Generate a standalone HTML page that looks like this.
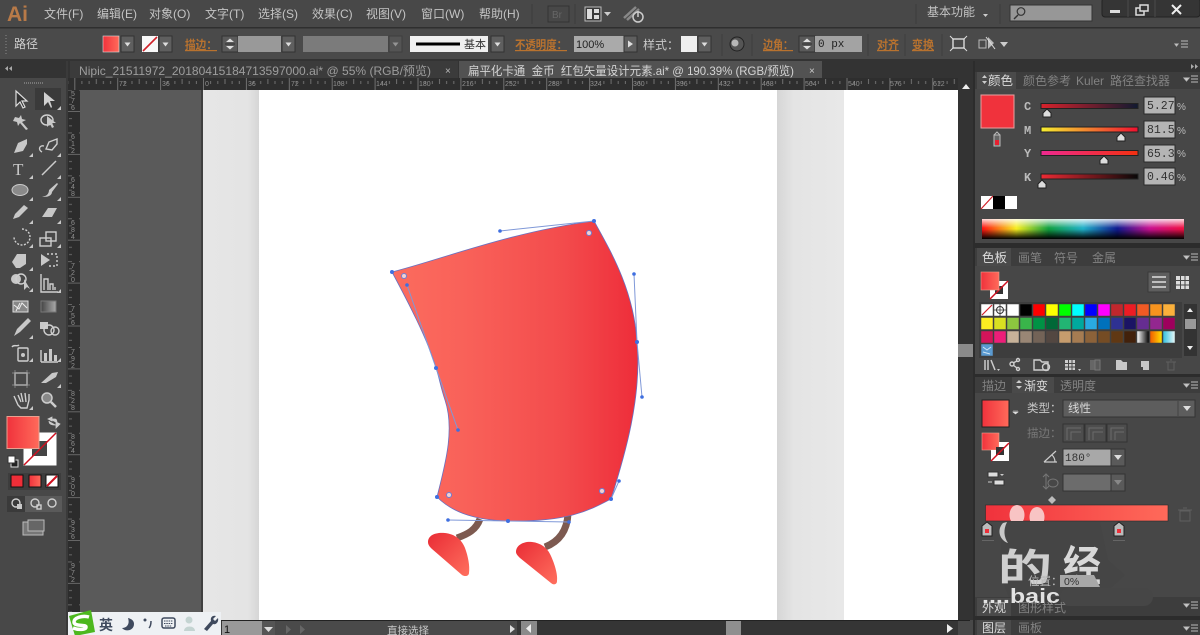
<!DOCTYPE html>
<html><head><meta charset="utf-8">
<style>
html,body{margin:0;padding:0;background:#484848;width:1200px;height:635px;overflow:hidden}
svg{display:block;position:absolute;left:0;top:0}
text{font-family:"Liberation Sans","Noto Sans CJK SC",sans-serif;white-space:pre}
.m{font-size:12px;fill:#c4c4c4}
.o{font-size:12px;fill:#b8722f;text-decoration:underline;font-weight:bold}
.d{font-size:12px;fill:#828282}
.r{font-size:7px;fill:#8f8f8f}
.v{font-family:"Liberation Mono",monospace;font-size:11.5px;fill:#333}
.ic{fill:none;stroke:#cfcfcf;stroke-width:1.4}
.if{fill:#c8c8c8}
</style></head><body>
<svg width="1200" height="635" viewBox="0 0 1200 635" xmlns="http://www.w3.org/2000/svg">
<defs>
<linearGradient id="body" x1="0" x2="1" y1="0" y2="0"><stop offset="0" stop-color="#fb6c5e"/><stop offset=".3" stop-color="#f96159"/><stop offset=".7" stop-color="#f34b4c"/><stop offset="1" stop-color="#ee2d3a"/></linearGradient>
<linearGradient id="g" x1="0" x2="1" y1="0" y2="0"><stop offset="0" stop-color="#f0323c"/><stop offset="1" stop-color="#ff6a5a"/></linearGradient>
<linearGradient id="gt" x1="0" x2="1" y1="0" y2="0"><stop offset="0" stop-color="#444"/><stop offset="1" stop-color="#aaa"/></linearGradient>
<linearGradient id="foot" x1="0" x2="1" y1="0" y2="1"><stop offset="0" stop-color="#e92c35"/><stop offset="1" stop-color="#ff6f5e"/></linearGradient>
<linearGradient id="paste" x1="0" x2="1" y1="0" y2="0"><stop offset="0" stop-color="#e6e6e6"/><stop offset=".8" stop-color="#e4e4e4"/><stop offset="1" stop-color="#d6d6d6"/></linearGradient>
<linearGradient id="paste2" x1="0" x2="1" y1="0" y2="0"><stop offset="0" stop-color="#d6d6d6"/><stop offset=".25" stop-color="#e4e4e4"/><stop offset="1" stop-color="#e8e8e8"/></linearGradient>
<linearGradient id="spec" x1="0" x2="1" y1="0" y2="0"><stop offset="0" stop-color="#ff1010"/><stop offset=".17" stop-color="#f6ee20"/><stop offset=".33" stop-color="#10a040"/><stop offset=".5" stop-color="#20b0c8"/><stop offset=".67" stop-color="#101a90"/><stop offset=".83" stop-color="#c81090"/><stop offset="1" stop-color="#f01040"/></linearGradient>
<linearGradient id="specv" x1="0" x2="0" y1="0" y2="1"><stop offset="0" stop-color="#fff" stop-opacity=".85"/><stop offset=".45" stop-color="#fff" stop-opacity="0"/><stop offset=".5" stop-color="#000" stop-opacity="0"/><stop offset="1" stop-color="#000" stop-opacity="1"/></linearGradient>
<linearGradient id="sc" x1="0" x2="1"><stop offset="0" stop-color="#d8222c"/><stop offset="1" stop-color="#101a30"/></linearGradient>
<linearGradient id="sm" x1="0" x2="1"><stop offset="0" stop-color="#f5ee30"/><stop offset="1" stop-color="#f01030"/></linearGradient>
<linearGradient id="sy" x1="0" x2="1"><stop offset="0" stop-color="#ee2a90"/><stop offset="1" stop-color="#f23010"/></linearGradient>
<linearGradient id="sk" x1="0" x2="1"><stop offset="0" stop-color="#ee2a34"/><stop offset="1" stop-color="#080808"/></linearGradient>
<linearGradient id="g1" x1="0" x2="1"><stop offset="0" stop-color="#fff"/><stop offset="1" stop-color="#000"/></linearGradient>
<linearGradient id="g2" x1="0" x2="1"><stop offset="0" stop-color="#f15a00"/><stop offset="1" stop-color="#ffe000"/></linearGradient>
<linearGradient id="g3" x1="0" x2="1"><stop offset="0" stop-color="#30c0e0"/><stop offset="1" stop-color="#e8f8f8"/></linearGradient>
<pattern id="th" x="203" y="0" width="42.9" height="12" patternUnits="userSpaceOnUse">
<path d="M.5 0V12M7.6 9V12M14.8 9V12M22 7V12M29.1 9V12M36.3 9V12" stroke="#707070" stroke-width="1" fill="none"/></pattern>
<pattern id="tv" x="0" y="111" width="12" height="42.9" patternUnits="userSpaceOnUse">
<path d="M0 .5H12M9 7.6H12M9 14.8H12M7 22H12M9 29.1H12M9 36.3H12" stroke="#666" stroke-width="1" fill="none"/></pattern>
<g id="arrowbtn"><rect width="13" height="16" fill="#5f5f5f" stroke="#333"/><path d="M3.5 6.5H9.5L6.5 10.5Z" fill="#ddd"/></g>
<g id="stepper"><rect width="16" height="16" fill="#5a5a5a" stroke="#333"/><path d="M8 2.5L12 6H4ZM8 13.5L4 10H12Z" fill="#ddd"/><path d="M3 8H13" stroke="#333"/></g>
<path id="corner" d="M0 4L4 0V4Z" fill="#c8c8c8"/>
<path id="thumb" d="M-4 5V1L0 -3L4 1V5Z" fill="#ddd" stroke="#222"/>
</defs>

<g style="filter:blur(.35px)">
<!-- base -->
<rect width="1200" height="635" fill="#484848"/>
<!-- menu bar -->
<rect width="1200" height="27" fill="#484848"/>
<rect y="27" width="1200" height="1.5" fill="#2f2f2f"/>
<text x="7" y="21" font-size="21" fill="#b87a48" font-weight="bold">Ai</text>
<text class="m" x="44" y="18">文件(F)</text>
<text class="m" x="97" y="18">编辑(E)</text>
<text class="m" x="149" y="18">对象(O)</text>
<text class="m" x="205" y="18">文字(T)</text>
<text class="m" x="258" y="18">选择(S)</text>
<text class="m" x="312" y="18">效果(C)</text>
<text class="m" x="366" y="18">视图(V)</text>
<text class="m" x="421" y="18">窗口(W)</text>
<text class="m" x="479" y="18">帮助(H)</text>
<path d="M532 4V24M575 4V24M916 4V24M1000 4V24" stroke="#3c3c3c"/>
<rect x="548" y="6" width="21" height="16" fill="none" stroke="#333"/>
<text x="552" y="18" font-size="10" fill="#666">Br</text>
<g><rect x="585" y="7" width="16" height="14" fill="#3a3a3a" stroke="#bbb"/><rect x="587" y="9" width="5" height="10" fill="#ddd"/><rect x="594" y="9" width="5" height="4" fill="#ddd"/><rect x="594" y="15" width="5" height="4" fill="#ddd"/><path d="M604 12H611L607.5 16Z" fill="#ccc"/></g>
<path d="M624 18L636 7M627 20L639 9" stroke="#888" stroke-width="2.5" fill="none"/>
<circle cx="638" cy="17" r="5" fill="none" stroke="#ccc" stroke-width="1.5"/><path d="M638 11V17" stroke="#ccc" stroke-width="1.5"/>
<text class="m" x="927" y="16">基本功能</text>
<path d="M983 14H988L985.5 17Z" fill="#ccc"/>
<rect x="1010" y="5" width="82" height="16" fill="#979797" stroke="#333"/>
<circle cx="1021" cy="11.5" r="3.8" fill="none" stroke="#333" stroke-width="1.2"/><path d="M1018 15L1014 19" stroke="#333" stroke-width="1.4"/>
<rect x="1102" y="-2" width="98" height="19" rx="3" fill="#353535" stroke="#222"/>
<path d="M1128 0V17M1155 0V17" stroke="#4a4a4a"/>
<rect x="1110" y="10" width="10" height="3" fill="#ddd"/>
<rect x="1136" y="8" width="8" height="7" fill="none" stroke="#ddd" stroke-width="1.5"/><rect x="1140" y="5" width="8" height="6" fill="#353535" stroke="#ddd" stroke-width="1.5"/>
<path d="M1172 5L1181 14M1181 5L1172 14" stroke="#eee" stroke-width="2"/>

<!-- control bar -->
<rect y="29" width="1200" height="31" fill="#4a4a4a"/>
<rect y="59" width="1200" height="2" fill="#333"/>
<path d="M6 35V54" stroke="#6a6a6a" stroke-dasharray="1 2" stroke-width="2"/>
<text x="14" y="48" font-size="12" fill="#d0d0d0">路径</text>
<rect x="103" y="36" width="16" height="16" fill="url(#g)" stroke="#ddd" stroke-width=".6"/>
<use href="#arrowbtn" x="121" y="36"/>
<rect x="142" y="36" width="16" height="16" fill="#f8f8f8"/><path d="M143 51L157 37" stroke="#d02028" stroke-width="1.6"/>
<use href="#arrowbtn" x="159" y="36"/>
<text class="o" x="185" y="49" textLength="32" lengthAdjust="spacingAndGlyphs">描边：</text>
<use href="#stepper" x="222" y="36"/>
<rect x="238" y="36" width="43" height="16" fill="#999"/>
<use href="#arrowbtn" x="282" y="36"/>
<rect x="303" y="36" width="85" height="16" fill="#7b7b7b"/>
<g opacity=".5"><use href="#arrowbtn" x="389" y="36"/></g>
<rect x="410" y="36" width="78" height="16" fill="#f0f0f0"/>
<rect x="416" y="42.5" width="44" height="3" fill="#000"/>
<text x="464" y="48" font-size="11" fill="#333">基本</text>
<use href="#arrowbtn" x="491" y="36"/>
<text class="o" x="515" y="49" textLength="52" lengthAdjust="spacingAndGlyphs">不透明度：</text>
<rect x="574" y="36" width="50" height="16" fill="#aaa"/>
<text x="576" y="48" font-size="11" fill="#222">100%</text>
<rect x="624" y="36" width="13" height="16" fill="#5f5f5f" stroke="#333"/><path d="M628 40.5L633 44L628 47.5Z" fill="#ddd"/>
<text x="643" y="49" font-size="12" fill="#c8c8c8">样式：</text>
<rect x="681" y="36" width="16" height="16" fill="#eee"/>
<use href="#arrowbtn" x="698" y="36"/>
<circle cx="737" cy="44" r="7" fill="#555" stroke="#222"/><circle cx="735" cy="43" r="3.5" fill="#b8b8b8"/>
<path d="M722 34V56M752 34V56M868 34V56M905 34V56M942 34V56" stroke="#3e3e3e"/>
<text class="o" x="763" y="49" textLength="30" lengthAdjust="spacingAndGlyphs">边角：</text>
<use href="#stepper" x="799" y="36"/>
<rect x="815" y="36" width="47" height="16" fill="#a3a3a3"/>
<text x="818" y="47" font-size="11" fill="#222" style="font-family:'Liberation Mono',monospace">0 px</text>
<text class="o" x="877" y="49" textLength="22" lengthAdjust="spacingAndGlyphs">对齐</text>
<text class="o" x="912" y="49" textLength="22" lengthAdjust="spacingAndGlyphs">变换</text>
<rect x="953" y="39" width="11" height="9" fill="none" stroke="#ddd" stroke-width="1.4"/>
<path d="M950 36l3 3M967 36l-3 3M950 51l3-3M967 51l-3-3" stroke="#ddd"/>
<rect x="979" y="40" width="7" height="8" fill="none" stroke="#bbb"/><path d="M988 37l6 6-6 6z" fill="#bbb"/><path d="M986 37l9 12" stroke="#ddd"/>
<path d="M1000 42H1008L1004 47Z" fill="#ccc"/>
<path d="M1175 44H1178L1176.500 46ZM1181 41H1188M1181 44H1188M1181 47H1188" stroke="#bbb" fill="#ccc"/>

<!-- tabs -->
<rect x="0" y="61" width="1200" height="17" fill="#333"/>
<rect x="70" y="61" width="388" height="17" fill="#3b3b3b"/>
<rect x="459" y="61" width="363" height="17" fill="#525252"/>
<text x="79" y="75" font-size="12" fill="#9d9d9d" textLength="352" lengthAdjust="spacingAndGlyphs">Nipic_21511972_20180415184713597000.ai* @ 55% (RGB/预览)</text>
<text x="445" y="74" font-size="10" fill="#bbb">×</text>
<text x="468" y="75" font-size="12" fill="#d4d4d4" textLength="326" lengthAdjust="spacingAndGlyphs">扁平化卡通  金币  红包矢量设计元素.ai* @ 190.39% (RGB/预览)</text>
<text x="809" y="74" font-size="10" fill="#ccc">×</text>

<!-- left toolbar -->
<rect x="0" y="78" width="68" height="542" fill="#484848"/>
<rect x="0" y="60" width="68" height="18" fill="#333"/>
<path d="M8 66L5 68.500L8 71ZM12 66L9 68.500L12 71Z" fill="#aaa"/>
<rect x="2" y="79" width="66" height="8" fill="#484848"/>
<path d="M24 83H44" stroke="#777" stroke-dasharray="1 1" stroke-width="2"/>
<rect x="66" y="61" width="2" height="574" fill="#3a3a3a"/>

<!-- rulers -->
<rect x="68" y="78" width="890" height="12" fill="#2e2e2e"/>
<rect x="68" y="78" width="890" height="12" fill="url(#th)"/>
<rect x="68" y="90" width="12" height="530" fill="#2c2c2c"/>
<rect x="68" y="90" width="12" height="530" fill="url(#tv)"/>
<text class="r" x="119" y="86">72</text><text class="r" x="162" y="86">36</text><text class="r" x="205" y="86">0</text><text class="r" x="248" y="86">36</text><text class="r" x="291" y="86">72</text><text class="r" x="333" y="86">108</text><text class="r" x="376" y="86">144</text><text class="r" x="419" y="86">180</text><text class="r" x="462" y="86">216</text><text class="r" x="505" y="86">252</text><text class="r" x="548" y="86">288</text><text class="r" x="590" y="86">324</text><text class="r" x="633" y="86">360</text><text class="r" x="676" y="86">396</text><text class="r" x="719" y="86">432</text><text class="r" x="762" y="86">468</text><text class="r" x="805" y="86">504</text><text class="r" x="848" y="86">540</text><text class="r" x="890" y="86">576</text><text class="r" x="933" y="86">612</text>
<g class="r" text-anchor="middle">
<text class="r" x="73" y="96"><tspan x="73">5</tspan><tspan x="73" dy="7">7</tspan><tspan x="73" dy="7">6</tspan></text>
<text class="r" x="73" y="139"><tspan x="73">6</tspan><tspan x="73" dy="7">1</tspan><tspan x="73" dy="7">2</tspan></text>
<text class="r" x="73" y="182"><tspan x="73">6</tspan><tspan x="73" dy="7">4</tspan><tspan x="73" dy="7">8</tspan></text>
<text class="r" x="73" y="225"><tspan x="73">6</tspan><tspan x="73" dy="7">8</tspan><tspan x="73" dy="7">4</tspan></text>
<text class="r" x="73" y="268"><tspan x="73">7</tspan><tspan x="73" dy="7">2</tspan><tspan x="73" dy="7">0</tspan></text>
<text class="r" x="73" y="311"><tspan x="73">7</tspan><tspan x="73" dy="7">5</tspan><tspan x="73" dy="7">6</tspan></text>
<text class="r" x="73" y="354"><tspan x="73">7</tspan><tspan x="73" dy="7">9</tspan><tspan x="73" dy="7">2</tspan></text>
<text class="r" x="73" y="396"><tspan x="73">8</tspan><tspan x="73" dy="7">2</tspan><tspan x="73" dy="7">8</tspan></text>
<text class="r" x="73" y="439"><tspan x="73">8</tspan><tspan x="73" dy="7">6</tspan><tspan x="73" dy="7">4</tspan></text>
<text class="r" x="73" y="482"><tspan x="73">9</tspan><tspan x="73" dy="7">0</tspan><tspan x="73" dy="7">0</tspan></text>
<text class="r" x="73" y="525"><tspan x="73">9</tspan><tspan x="73" dy="7">3</tspan><tspan x="73" dy="7">6</tspan></text>
<text class="r" x="73" y="568"><tspan x="73">9</tspan><tspan x="73" dy="7">7</tspan><tspan x="73" dy="7">2</tspan></text>
</g>

<!-- canvas -->
<rect x="80" y="90" width="122" height="530" fill="#5a5a5a"/>
<rect x="201" y="90" width="2" height="530" fill="#3f3f3f"/>
<rect x="203" y="90" width="56" height="530" fill="url(#paste)"/>
<rect x="259" y="90" width="518" height="530" fill="#fff"/>
<rect x="777" y="90" width="67" height="530" fill="url(#paste2)"/>
<rect x="844" y="90" width="114" height="530" fill="#fff"/>

<!-- artwork -->
<path d="M480 519C476 530 468 534 457 538" fill="none" stroke="#7d5a50" stroke-width="7"/>
<path d="M568 514C567 532 558 542 545 547" fill="none" stroke="#7d5a50" stroke-width="7"/>
<path d="M428 542C428 535 436 532 445 533C455 534 462 540 465 548C468 556 470 566 469 573C469 576 465 577 462 575L432 549C430 547 428 545 428 542Z" fill="url(#foot)"/>
<path d="M516 552C516 545 524 541 532 542C541 543 547 548 550 554C554 562 558 574 557 581C557 585 553 585 551 583L520 558C518 556 516 554 516 552Z" fill="url(#foot)"/>
<path d="M392 272C440 260 510 232 594 221C610 250 634 290 637 342C642 397 625 455 611 499C590 510 569 522 508 521C470 520 450 510 437 497C445 465 455 430 445 400C440 385 440 380 436 368C428 340 407 300 392 272Z" fill="url(#body)" stroke="#6a70c0" stroke-width=".8"/>
<g stroke="#7f98d8" stroke-width="1" fill="none">
<path d="M500 231L594 221M634 274L637 342L642 397M407 285L436 368L458 430M448 520L508 521L569 522M611 499L619 481"/>
</g>
<g fill="#3f6fe0">
<circle cx="392" cy="272" r="2"/><circle cx="594" cy="221" r="2"/><circle cx="637" cy="342" r="2"/><circle cx="436" cy="368" r="2"/><circle cx="437" cy="497" r="2"/><circle cx="611" cy="499" r="2"/><circle cx="508" cy="521" r="2"/>
<circle cx="500" cy="231" r="1.800"/><circle cx="634" cy="274" r="1.800"/><circle cx="642" cy="397" r="1.800"/><circle cx="407" cy="285" r="1.800"/><circle cx="458" cy="430" r="1.800"/><circle cx="448" cy="520" r="1.800"/><circle cx="569" cy="522" r="1.800"/><circle cx="619" cy="481" r="1.800"/>
</g>
<g fill="#f4d0d0" stroke="#6a80d8" stroke-width="1">
<circle cx="404" cy="276" r="2.500"/><circle cx="589" cy="233" r="2.500"/><circle cx="449" cy="495" r="2.500"/><circle cx="602" cy="491" r="2.500"/>
</g>

<!-- tools -->
<rect x="35" y="88" width="26" height="22" fill="#3a3a3a"/>
<g>
<path d="M16 91V106L20 102L23 108L25 107L22 101H27Z" fill="#333" stroke="#ddd" stroke-width="1.200"/>
<path d="M44 92V106L48 102L51 108L52 107L50 101H55Z" fill="#d0d0d0"/>
<use href="#corner" x="57" y="106"/>
<path d="M15 117L19 118L21 115L22 119L26 120L22 122L28 129L26 130L20 123L18 126L17 122L13 121Z" class="if"/>
<ellipse cx="47" cy="120" rx="6" ry="5" class="ic"/><path d="M47 116V127L50 124L52 128L54 127L52 123H56Z" class="if"/>
<path d="M14 153L18 143L27 139L27 144L23 151ZM20 147L14 153" class="if"/><use href="#corner" x="29" y="153"/>
<path d="M42 152C38 150 39 145 44 146M46 149L49 142L57 139L57 144L52 150Z" class="ic"/><use href="#corner" x="57" y="153"/>
<text x="13" y="175" font-size="17" fill="#c8c8c8" style="font-family:'Liberation Serif',serif">T</text><use href="#corner" x="29" y="175"/>
<path d="M42 175L56 161" stroke="#ccc" stroke-width="1.500"/><use href="#corner" x="57" y="175"/>
<ellipse cx="20" cy="190" rx="8" ry="5.500" fill="#8a8a8a" stroke="#ccc"/><use href="#corner" x="29" y="197"/>
<path d="M42 196C47 197 49 193 49 190L57 183L58 184L52 192C52 196 46 198 42 196Z" class="if"/><use href="#corner" x="57" y="197"/>
<path d="M13 219L15 214L24 205L28 208L19 217Z" class="if"/><use href="#corner" x="29" y="220"/>
<path d="M42 217L48 208H57L52 217ZM44 214H53" class="if"/><use href="#corner" x="57" y="220"/>
<path d="M22 229A8 8 0 1 1 14 237" class="ic" stroke-dasharray="2 1.500"/><use href="#corner" x="29" y="244"/>
<rect x="40" y="238" width="11" height="8" class="ic"/><rect x="46" y="232" width="10" height="9" class="ic"/><use href="#corner" x="57" y="244"/>
<path d="M17 254H26V264L20 268H16L12 262Z" class="if"/><use href="#corner" x="29" y="267"/>
<path d="M41 254L50 260L41 266Z" class="if"/><path d="M47 254H57V266H47" class="ic" stroke-dasharray="2 2"/>
<circle cx="16" cy="279" r="5" class="if"/><circle cx="21" cy="279" r="5" class="ic"/><path d="M24 279V290L27 287L30 289Z" class="if"/><use href="#corner" x="29" y="288"/>
<path d="M41 274V292H58M44 290V279H48V290M50 290V284H53V290M55 290V287" class="ic"/><use href="#corner" x="57" y="289"/>
<rect x="13" y="301" width="15" height="11" fill="#888" stroke="#ddd"/><path d="M14 305L19 309L22 303L27 308M16 311L20 303" stroke="#eee" fill="none"/>
<rect x="41" y="301" width="15" height="11" fill="url(#gt)" stroke="#777"/>
<path d="M14 336L17 329L24 322L27 325L20 332ZM24 322L28 318L31 321L27 325" class="if"/><use href="#corner" x="29" y="335"/>
<rect x="40" y="322" width="8" height="7" class="if"/><circle cx="49" cy="330" r="5" class="ic"/><circle cx="55" cy="331" r="4" class="ic"/>
<rect x="18" y="348" width="10" height="13" rx="1" class="ic"/><circle cx="23" cy="355" r="2" class="if"/><path d="M12 347C14 344 17 347 19 345" class="ic"/><use href="#corner" x="29" y="358"/>
<path d="M41 362V350M41 362H58" class="ic"/><rect x="44" y="353" width="3" height="8" class="if"/><rect x="49" y="349" width="3" height="12" class="if"/><rect x="54" y="355" width="3" height="6" class="if"/><use href="#corner" x="57" y="358"/>
<rect x="15" y="373" width="12" height="12" class="ic"/><path d="M12 373H30M12 385H30M15 370V388M27 370V388" stroke="#999" stroke-width=".7"/>
<path d="M41 383L52 373L58 372L56 377L46 383Z" class="if"/><use href="#corner" x="57" y="384"/>
<path d="M14 396L18 405L21 408H27L29 400L29 394M18 395L21 402M21 393L23 402M25 393L26 402" class="ic" stroke-width="2"/><use href="#corner" x="29" y="406"/>
<circle cx="47" cy="398" r="5" fill="#888" stroke="#ccc" stroke-width="1.500"/><path d="M51 402L56 407" stroke="#ccc" stroke-width="2.500"/>
</g>
<!-- color tools -->
<rect x="23.500" y="432.500" width="33" height="33" fill="#fff"/>
<rect x="32" y="441" width="15" height="15" fill="#454545"/>
<path d="M24 465L56 433" stroke="#d01020" stroke-width="1.500"/>
<rect x="7" y="416.500" width="32" height="32" fill="url(#g)" stroke="#e8a090"/>
<path d="M48 419L52 417V421ZM60 424L56 428V422ZM49 419H55C56 419 57 420 57 423M49 421C49 424 51 425 56 425" stroke="#ccc" fill="#ccc" stroke-width=".8"/>
<rect x="11" y="460" width="7" height="7" fill="#222" stroke="#ddd"/><rect x="8" y="456" width="7" height="7" fill="#fff" stroke="#333"/>
<rect x="8" y="473" width="53" height="17" fill="#3d3d3d"/>
<rect x="11" y="475" width="12" height="12" fill="#ee2e38" stroke="#111"/><rect x="29" y="475" width="12" height="12" fill="url(#g)" stroke="#111"/><rect x="46" y="475" width="12" height="12" fill="#fff" stroke="#111"/><path d="M47 486L57 476" stroke="#d01020" stroke-width="2"/>
<rect x="7" y="496" width="55" height="16" fill="#5a5a5a"/><rect x="7" y="496" width="18" height="16" fill="#3a3a3a"/>
<circle cx="16" cy="503" r="4" class="ic"/><rect x="17" y="504" width="5" height="5" class="if"/><circle cx="35" cy="503" r="4" class="ic"/><rect x="37" y="505" width="4" height="4" class="ic"/><circle cx="52" cy="503" r="4" class="ic"/>
<rect x="23" y="522" width="20" height="13" fill="#777" stroke="#bbb"/><rect x="28" y="520" width="16" height="11" fill="#666" stroke="#bbb"/>

<!-- v scrollbar -->
<rect x="958" y="78" width="16" height="542" fill="#333"/>
<path d="M962 89L966 84L970 89Z" fill="#eee"/>
<rect x="958" y="344" width="15" height="13" fill="#8a8a8a"/>
<rect x="973" y="61" width="2" height="574" fill="#2c2c2c"/>

<!-- status bar -->
<rect x="68" y="620" width="890" height="15" fill="#353535"/>
<rect x="80" y="620" width="890" height="1" fill="#222"/>
<rect x="222" y="621" width="40" height="14" fill="#999"/><text x="224" y="633" font-size="11" fill="#111">1</text>
<rect x="262" y="621" width="13" height="14" fill="#555"/><path d="M264 627H273L268.500 632Z" fill="#ddd"/>
<rect x="275" y="621" width="242" height="14" fill="#4a4a4a"/>
<path d="M286 625L291 629.500L286 634ZM300 625L305 629.500L300 634" fill="#666"/>
<text x="387" y="634" font-size="10.500" fill="#c8c8c8">直接选择</text>
<path d="M510 625L515 629L510 633Z" fill="#ddd"/>
<rect x="521" y="621" width="16" height="14" fill="#8a8a8a"/><path d="M531 624L526 628.500L531 633Z" fill="#eee"/>
<rect x="726" y="621" width="15" height="14" fill="#8f8f8f"/>
<path d="M947 624L953 628.500L947 633Z" fill="#eee"/>

<!-- IME bar -->
<rect x="68" y="612" width="153" height="23" fill="#eef1f4"/>
<path d="M69 616L91 610L95 632L75 636Z" fill="#4cb81e"/>
<path d="M89 617C82 615 74 618 74 622C74 627 86 624 86 627C86 630 78 630 73 628" fill="none" stroke="#fff" stroke-width="3.500"/>
<text x="99" y="630" font-size="14" font-weight="bold" fill="#3f4a5e">英</text>
<path d="M128 618C130 624 127 628 122 628C125 632 134 631 134 624C134 621 132 619 128 618Z" fill="#3f4a5e"/>
<circle cx="145" cy="620" r="1.500" fill="#3f4a5e"/><path d="M151 621C151 625 150 627 149 628" stroke="#3f4a5e" stroke-width="1.500" fill="none"/>
<rect x="162" y="618" width="13" height="10" rx="2" fill="none" stroke="#3f4a5e" stroke-width="1.500"/><path d="M164 621H173M164 623.500H173M165 626H172" stroke="#3f4a5e" stroke-dasharray="1.500 .8"/>
<circle cx="189" cy="620" r="3.500" fill="#c4d4d2"/><path d="M184 631C184 625 195 625 195 631Z" fill="#c4d4d2"/>
<path d="M204 629L211 621C210 617 213 615 216 616L213 619L215 621L218 618C219 622 216 625 213 624L207 631Z" fill="#3f4a5e"/>

<!-- right panel: color -->
<rect x="975" y="61" width="225" height="574" fill="#474747"/>
<rect x="975" y="61" width="225" height="11" fill="#333"/>
<path d="M1191 64L1194 66.500L1191 69ZM1195 64L1198 66.500L1195 69Z" fill="#aaa"/>
<rect x="975" y="72" width="225" height="17" fill="#3d3d3d"/>
<rect x="977" y="72" width="39" height="17" fill="#4a4a4a"/>
<path d="M982 78L984.500 75L987 78ZM982 81L984.500 84L987 81Z" fill="#ccc"/>
<text x="988" y="85" font-size="12.500" fill="#dcdcdc">颜色</text>
<text class="d" x="1023" y="85">颜色参考</text><text class="d" x="1076" y="85">Kuler</text><text class="d" x="1110" y="85">路径查找器</text>
<path d="M1184 78H1189L1186.500 81ZM1191 76H1198M1191 79H1198M1191 82H1198" stroke="#bbb" fill="#ccc"/>
<rect x="981" y="95" width="33" height="33" fill="#f0323c" stroke="#e8a0a0"/>
<path d="M994 135H1000V146H994Z" fill="#666" stroke="#bbb"/><rect x="995" y="140" width="4" height="5" fill="#e82030"/><path d="M994 135L997 132L1000 135" fill="none" stroke="#bbb"/>
<text x="1024" y="110" style="font-family:'Liberation Mono',monospace" font-size="12" fill="#bbb" font-weight="bold">C</text>
<text x="1024" y="134" style="font-family:'Liberation Mono',monospace" font-size="12" fill="#bbb" font-weight="bold">M</text>
<text x="1024" y="157" style="font-family:'Liberation Mono',monospace" font-size="12" fill="#bbb" font-weight="bold">Y</text>
<text x="1024" y="181" style="font-family:'Liberation Mono',monospace" font-size="12" fill="#bbb" font-weight="bold">K</text>
<rect x="1041" y="103.500" width="97" height="5" fill="url(#sc)" stroke="#222"/>
<rect x="1041" y="127" width="97" height="5" fill="url(#sm)" stroke="#222"/>
<rect x="1041" y="150.500" width="97" height="5" fill="url(#sy)" stroke="#222"/>
<rect x="1041" y="174" width="97" height="5" fill="url(#sk)" stroke="#222"/>
<use href="#thumb" x="1047" y="112"/><use href="#thumb" x="1121" y="136"/><use href="#thumb" x="1104" y="159"/><use href="#thumb" x="1042" y="183"/>
<rect x="1144" y="97" width="31" height="17" fill="#b4b4b4" stroke="#2a2a2a"/><rect x="1144" y="121" width="31" height="17" fill="#b4b4b4" stroke="#2a2a2a"/><rect x="1144" y="145" width="31" height="17" fill="#b4b4b4" stroke="#2a2a2a"/><rect x="1144" y="168" width="31" height="17" fill="#b4b4b4" stroke="#2a2a2a"/>
<text class="v" x="1147" y="109">5.27</text>
<svg x="1144" y="121" width="31" height="17"><text class="v" x="3" y="12">81.57</text></svg>
<svg x="1144" y="145" width="31" height="17"><text class="v" x="3" y="12">65.34</text></svg>
<text class="v" x="1147" y="180">0.46</text>
<text x="1177" y="110" font-size="10" fill="#bbb">%</text><text x="1177" y="134" font-size="10" fill="#bbb">%</text><text x="1177" y="157" font-size="10" fill="#bbb">%</text><text x="1177" y="181" font-size="10" fill="#bbb">%</text>
<rect x="981" y="196" width="12" height="13" fill="#fff"/><path d="M981 209L993 196" stroke="#d02028" stroke-width="1.200"/><rect x="993" y="196" width="12" height="13" fill="#000"/><rect x="1005" y="196" width="12" height="13" fill="#fff"/>
<rect x="982" y="219" width="202" height="20" fill="url(#spec)"/><rect x="982" y="219" width="202" height="20" fill="url(#specv)"/>

<!-- swatches panel -->
<rect x="975" y="243" width="225" height="5" fill="#2c2c2c"/>
<rect x="975" y="248" width="225" height="18" fill="#3d3d3d"/>
<rect x="977" y="248" width="34" height="18" fill="#4a4a4a"/>
<text x="982" y="262" font-size="12.500" fill="#dcdcdc">色板</text><text class="d" x="1018" y="262">画笔</text><text class="d" x="1054" y="262">符号</text><text class="d" x="1092" y="262">金属</text>
<path d="M1184 256H1189L1186.500 259ZM1191 254H1198M1191 257H1198M1191 260H1198" stroke="#bbb" fill="#ccc"/>
<rect x="990" y="281" width="18" height="18" fill="#fff"/><rect x="995" y="286" width="8" height="8" fill="#333"/><path d="M990 299L1008 281" stroke="#d01020" stroke-width="1.500"/>
<rect x="981" y="272" width="18" height="18" fill="url(#g)" stroke="#e8a090" stroke-width=".6"/>
<rect x="1148" y="272" width="22" height="20" fill="#5e5e5e" stroke="#3a3a3a"/><path d="M1152 277H1166M1152 282H1166M1152 287H1166" stroke="#ddd" stroke-width="1.500"/>
<path d="M1176 276h13v13h-13z" fill="#ddd"/><path d="M1180.500 275V290M1185 275V290M1175 280.500H1190M1175 285H1190" stroke="#474747"/>
<rect x="979" y="302" width="203" height="56" fill="#3d3d3d"/>
<g stroke="#444" stroke-width=".5">
<rect x="981" y="304" width="12" height="12" fill="#fff"/><rect x="994" y="304" width="12" height="12" fill="#fff"/><rect x="1007" y="304" width="12" height="12" fill="#fff"/><rect x="1020" y="304" width="12" height="12" fill="#000"/><rect x="1033" y="304" width="12" height="12" fill="#f00"/><rect x="1046" y="304" width="12" height="12" fill="#ff0"/><rect x="1059" y="304" width="12" height="12" fill="#0f0"/><rect x="1072" y="304" width="12" height="12" fill="#0ff"/><rect x="1085" y="304" width="12" height="12" fill="#00f"/><rect x="1098" y="304" width="12" height="12" fill="#f0f"/><rect x="1111" y="304" width="12" height="12" fill="#c1272d"/><rect x="1124" y="304" width="12" height="12" fill="#ed1c24"/><rect x="1137" y="304" width="12" height="12" fill="#f15a24"/><rect x="1150" y="304" width="12" height="12" fill="#f7931e"/><rect x="1163" y="304" width="12" height="12" fill="#fbb03b"/>
<rect x="981" y="317.500" width="12" height="12" fill="#fcee21"/><rect x="994" y="317.500" width="12" height="12" fill="#d9e021"/><rect x="1007" y="317.500" width="12" height="12" fill="#8cc63f"/><rect x="1020" y="317.500" width="12" height="12" fill="#39b54a"/><rect x="1033" y="317.500" width="12" height="12" fill="#009245"/><rect x="1046" y="317.500" width="12" height="12" fill="#006837"/><rect x="1059" y="317.500" width="12" height="12" fill="#22b573"/><rect x="1072" y="317.500" width="12" height="12" fill="#00a99d"/><rect x="1085" y="317.500" width="12" height="12" fill="#29abe2"/><rect x="1098" y="317.500" width="12" height="12" fill="#0071bc"/><rect x="1111" y="317.500" width="12" height="12" fill="#2e3192"/><rect x="1124" y="317.500" width="12" height="12" fill="#1b1464"/><rect x="1137" y="317.500" width="12" height="12" fill="#662d91"/><rect x="1150" y="317.500" width="12" height="12" fill="#93278f"/><rect x="1163" y="317.500" width="12" height="12" fill="#9e005d"/>
<rect x="981" y="331" width="12" height="12" fill="#d4145a"/><rect x="994" y="331" width="12" height="12" fill="#ed1e79"/><rect x="1007" y="331" width="12" height="12" fill="#c7b299"/><rect x="1020" y="331" width="12" height="12" fill="#998675"/><rect x="1033" y="331" width="12" height="12" fill="#736357"/><rect x="1046" y="331" width="12" height="12" fill="#534741"/><rect x="1059" y="331" width="12" height="12" fill="#c69c6d"/><rect x="1072" y="331" width="12" height="12" fill="#a67c52"/><rect x="1085" y="331" width="12" height="12" fill="#8c6239"/><rect x="1098" y="331" width="12" height="12" fill="#754c24"/><rect x="1111" y="331" width="12" height="12" fill="#603813"/><rect x="1124" y="331" width="12" height="12" fill="#42210b"/><rect x="1137" y="331" width="12" height="12" fill="url(#g1)"/><rect x="1150" y="331" width="12" height="12" fill="url(#g2)"/><rect x="1163" y="331" width="12" height="12" fill="url(#g3)"/>
<rect x="981" y="344" width="12" height="12" fill="#5a9ad0"/>
</g>
<path d="M982 315L992 305" stroke="#d02028" stroke-width="1.200"/>
<circle cx="1000" cy="310" r="3.500" fill="none" stroke="#333"/><path d="M994 310H1006M1000 304V316" stroke="#333" stroke-width=".8"/>
<path d="M983 347L987 350L991 347M983 352L990 354" stroke="#cfe4f4" fill="none"/>
<rect x="1184" y="304" width="13" height="52" fill="#333"/>
<path d="M1187 312L1190 308L1193 312Z" fill="#eee"/><rect x="1185" y="319" width="11" height="10" fill="#999"/><path d="M1187 346H1193L1190 350Z" fill="#eee"/>
<g>
<path d="M985 360V370M988 360V370M991 360L995 370" stroke="#ccc" stroke-width="1.500"/><path d="M997 369H1000L998.500 371Z" fill="#ccc"/>
<circle cx="1012" cy="364" r="2" class="ic"/><circle cx="1018" cy="360" r="1.500" class="ic"/><circle cx="1018" cy="369" r="1.500" class="ic"/><path d="M1013 363L1017 361M1013 365L1017 368" class="ic" stroke-width=".8"/>
<path d="M1034 360H1040L1042 362H1048V370H1034Z" class="ic"/><circle cx="1046" cy="367" r="3.500" class="ic"/>
<path d="M1065 360h10v10h-10z" fill="#ccc"/><path d="M1068.500 359V371M1072 359V371M1064 363.500H1076M1064 367H1076" stroke="#474747"/><path d="M1078 369H1081L1079.500 371Z" fill="#ccc"/>
<rect x="1090" y="360" width="10" height="10" fill="#666"/><rect x="1095" y="360" width="5" height="10" fill="#5a5a5a" stroke="#777"/>
<path d="M1116 360H1121L1123 362H1127V370H1116Z" class="if"/>
<path d="M1141 361H1149V370H1143V367H1141ZM1141 360H1147" class="if"/>
<path d="M1166 362H1176M1168 362V370H1174V362M1170 360H1172" stroke="#5f5f5f" fill="none"/>
</g>

<!-- gradient panel -->
<rect x="975" y="374" width="225" height="3" fill="#2c2c2c"/>
<rect x="975" y="377" width="225" height="16" fill="#3d3d3d"/>
<rect x="1012" y="377" width="42" height="16" fill="#4a4a4a"/>
<text class="d" x="982" y="390">描边</text>
<path d="M1016 383L1019 380L1022 383ZM1016 386L1019 389L1022 386Z" fill="#ccc"/>
<text x="1024" y="390" font-size="12" fill="#dcdcdc">渐变</text>
<text class="d" x="1060" y="390">透明度</text>
<path d="M1184 384H1189L1186.500 387ZM1191 382H1198M1191 385H1198M1191 388H1198" stroke="#bbb" fill="#ccc"/>
<rect x="982" y="400" width="27" height="27" fill="url(#g)" stroke="#222"/>
<path d="M1013 412H1018L1015.500 414ZM1013 411H1018" stroke="#ddd" fill="#ddd" stroke-width=".6"/>
<text x="1027" y="412" font-size="11.500" fill="#c8c8c8">类型：</text>
<rect x="1063" y="400" width="132" height="17" fill="#5d5d5d" stroke="#333"/><path d="M1178 401V416" stroke="#444"/><path d="M1183 406H1191L1187 411Z" fill="#ddd"/>
<text x="1068" y="412" font-size="11.500" fill="#d8d8d8">线性</text>
<text x="1027" y="437" font-size="11.500" fill="#777">描边：</text>
<rect x="1063" y="424" width="21" height="18" fill="#4d4d4d" stroke="#333"/><rect x="1085" y="424" width="21" height="18" fill="#4d4d4d" stroke="#333"/><rect x="1107" y="424" width="20" height="18" fill="#4d4d4d" stroke="#333"/>
<path d="M1067 440V428H1081M1071 440V432H1081M1089 440V428H1103M1093 440V432H1103M1111 440V428H1124M1115 440V432H1124" fill="none" stroke="#6a6a6a"/>
<path d="M1044 462L1056 451M1044 462H1057M1052 455C1054 457 1055 459 1055 462" fill="none" stroke="#ccc" stroke-width="1.200"/>
<rect x="1063" y="449" width="48" height="17" fill="#a8a8a8" stroke="#333"/>
<text class="v" x="1065" y="461" style="font-size:11px">180°</text>
<rect x="1111" y="449" width="14" height="17" fill="#5a5a5a" stroke="#333"/><path d="M1114 455H1122L1118 460Z" fill="#ddd"/>
<path d="M1046 475V488M1043 477L1046 474L1049 477M1043 486L1046 489L1049 486" fill="none" stroke="#777"/><ellipse cx="1053" cy="483" rx="5" ry="4" fill="none" stroke="#777"/>
<rect x="1063" y="474" width="48" height="17" fill="#6c6c6c" stroke="#333"/><rect x="1111" y="474" width="14" height="17" fill="#5a5a5a" stroke="#333"/><path d="M1114 480H1122L1118 485Z" fill="#888"/>
<rect x="982" y="433" width="17" height="17" fill="url(#g)" stroke="#e8a090" stroke-width=".6"/>
<path d="M991 450H1009V461H991Z" fill="#fff"/><path d="M999 442H1009V450H999Z" fill="#fff"/><rect x="996" y="447" width="8" height="8" fill="#333"/><path d="M991 461L1009 443" stroke="#d01020" stroke-width="1.500"/>
<rect x="988" y="472" width="10" height="5" fill="#ddd" stroke="#333"/><path d="M1000 474H1004L1002 476Z" fill="#ccc"/><rect x="994" y="480" width="10" height="5" fill="#ddd" stroke="#333"/><path d="M988 482H992" stroke="#ccc"/>
<path d="M1052 496L1056 500L1052 504L1048 500Z" fill="#bbb"/>
<rect x="985.500" y="505" width="182.500" height="16" fill="url(#g)" stroke="#2c2c2c" stroke-width=".6"/>
<svg x="985" y="505" width="183" height="16"><ellipse cx="32" cy="10" rx="7.500" ry="10" fill="#f8c4c4"/><ellipse cx="52" cy="12" rx="7.500" ry="10" fill="#f8c4c4"/></svg>
<rect x="1180" y="511" width="10" height="10" fill="none" stroke="#5f5f5f"/><path d="M1178 510H1192M1183 508H1187" stroke="#5f5f5f"/>
<path d="M1119 522L1124 526V536H1114V526Z" fill="#bbb" stroke="#222"/><rect x="1117" y="529" width="4" height="4" fill="#ee2e38"/>
<path d="M987 522L992 526V536H982V526Z" fill="#bbb" stroke="#222"/><rect x="985" y="529" width="4" height="4" fill="#ee2e38"/>
<rect x="1113" y="540" width="12" height="1" fill="#666"/><rect x="982" y="540" width="12" height="1" fill="#666"/>
<!-- watermark -->
<path d="M1002 522H1100L1108 560L1125 575L1098 600H1010L1000 575Z" fill="#454545"/>
<text x="998" y="581" font-size="38" font-weight="bold" fill="#cfcfcf" textLength="54" lengthAdjust="spacingAndGlyphs">的</text>
<text x="1063" y="581" font-size="42" font-weight="bold" fill="#d8d8d8" textLength="38" lengthAdjust="spacingAndGlyphs">经</text>
<path d="M1003 523A12 12 0 0 0 1008 543C1004 537 1003 530 1007 522Z" fill="#c8c8c8"/>
<text x="1028" y="585" font-size="11.500" fill="#b8b8b8">位置：</text>
<path d="M1060 575H1094L1100 587H1060Z" fill="#a8a8a8"/><text x="1064" y="585" font-size="10.500" fill="#333">0%</text>
<rect x="975" y="597" width="225" height="19" fill="#3d3d3d"/>
<rect x="977" y="598" width="34" height="18" fill="#4a4a4a"/>
<rect x="1060" y="588" width="93" height="18" rx="9" fill="#464646"/>
<text x="982" y="603" font-size="20" fill="#e2e2e2" font-weight="bold" textLength="78" lengthAdjust="spacingAndGlyphs">....baic</text>
<text x="982" y="612" font-size="12" fill="#dcdcdc">外观</text><text class="d" x="1018" y="612">图形样式</text>
<path d="M1184 604H1189L1186.500 607ZM1191 602H1198M1191 605H1198M1191 608H1198" stroke="#bbb" fill="#ccc"/>
<rect x="975" y="616" width="225" height="4" fill="#2c2c2c"/>
<rect x="975" y="620" width="225" height="15" fill="#3d3d3d"/>
<rect x="977" y="620" width="34" height="15" fill="#4a4a4a"/>
<text x="982" y="632" font-size="12" fill="#dcdcdc">图层</text><text class="d" x="1018" y="632">画板</text>
<path d="M1184 627H1189L1186.500 630ZM1191 625H1198M1191 628H1198M1191 631H1198" stroke="#bbb" fill="#ccc"/>
</g>
</svg>
</body></html>
